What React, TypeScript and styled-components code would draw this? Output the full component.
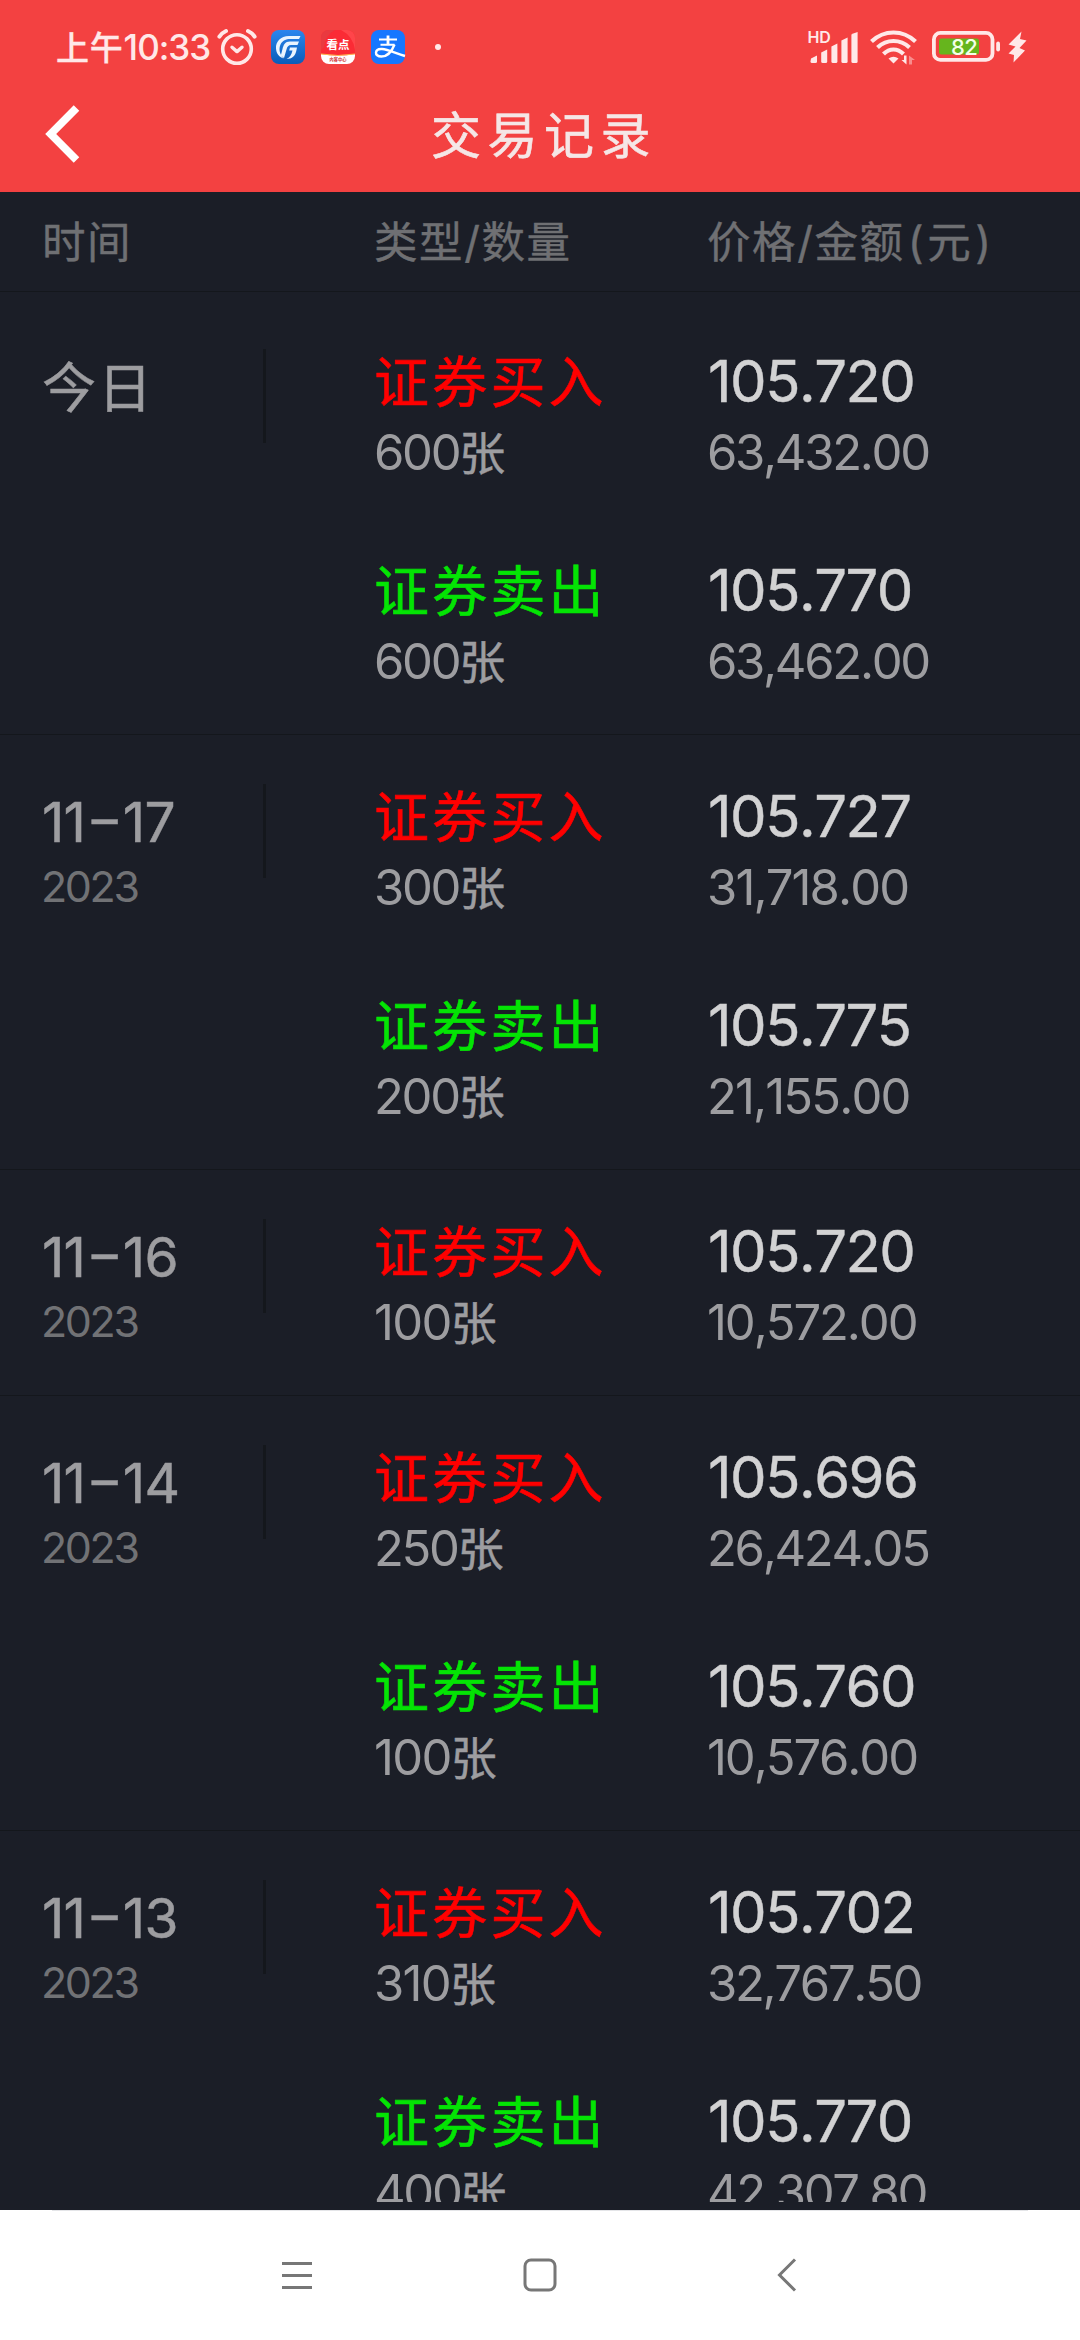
import React from "react";
import styled, { createGlobalStyle } from "styled-components";

const GlobalStyle = createGlobalStyle`
  * { box-sizing: border-box; }
  html, body { margin: 0; padding: 0; background: #1b1e27; }
  body { font-family: Inter, "Noto Sans CJK SC", sans-serif; font-kerning: none; }
`;

const Screen = styled.div`
  width: 1080px;
  height: 2340px;
  display: flex;
  flex-direction: column;
  overflow: hidden;
  background: #1b1e27;
  color: #9d9da0;
  white-space: nowrap;
`;

const TopBar = styled.header`
  height: 192px;
  background: #f34141;
`;

const StatusBar = styled.div`
  display: flex;
  justify-content: space-between;
  height: 80px;
  padding: 14px 53px 0 56px;
  color: #ffe8e8;
`;

const StatusSide = styled.div`
  display: flex;
  align-items: center;
  height: 66px;
`;

const Clock = styled.div`
  width: 161px;
  font-size: 35px;
  font-weight: 500;
  line-height: 66px;
  letter-spacing: -1px;
`;

const ClockPrefix = styled.span`
  font-size: 33px;
  letter-spacing: 0.8px;
  -webkit-text-stroke: 0.3px currentColor;
`;

const Glyph = styled.svg<{ $gap?: number }>`
  display: block;
  flex: none;
  overflow: visible;
  margin-left: ${(p) => p.$gap ?? 0}px;
  font-family: Inter, "Noto Sans CJK SC", sans-serif;
`;

const TitleBar = styled.div`
  display: grid;
  grid-template-columns: 200px 1fr 200px;
  align-items: center;
  height: 108px;
`;

const BackButton = styled.button`
  display: flex;
  border: 0;
  padding: 0 0 0 44px;
  background: none;
`;

const Title = styled.h1`
  margin: 0;
  padding: 4px 0 0 8px;
  text-align: center;
  font-size: 50px;
  font-weight: 400;
  line-height: 104px;
  letter-spacing: 6.5px;
  color: #f5e6e6;
  -webkit-text-stroke: 0.6px currentColor;
`;

const columns = "263px 111px 333px 1fr";

const TableHead = styled.div`
  display: grid;
  grid-template-columns: ${columns};
  height: 100px;
  padding-top: 1px;
  border-bottom: 1px solid #14171c;
  font-size: 43.5px;
  line-height: 98px;
  letter-spacing: 1.6px;
  color: #6f7073;
  -webkit-text-stroke: 0.4px currentColor;
`;

const HeadCell = styled.div<{ $column: number; $inset?: number }>`
  grid-column: ${(p) => p.$column};
  padding-left: ${(p) => p.$inset ?? 0}px;
`;

const Paren = styled.span`
  margin: 0 2px 0 3px;
`;

const List = styled.main`
  height: 1910px;
  padding-top: 8px;
  overflow: hidden;
`;

const DayGroup = styled.section`
  display: grid;
  grid-template-columns: ${columns};
  border-bottom: 1px solid #14171c;
`;

const DayCell = styled.div`
  padding: 52px 0 0 42px;
`;

const Day = styled.div<{ $word?: boolean }>`
  padding-top: ${(p) => (p.$word ? 2 : 0)}px;
  font-size: ${(p) => (p.$word ? 54 : 55)}px;
  line-height: 70px;
  letter-spacing: ${(p) => (p.$word ? 2 : -0.8)}px;
  -webkit-text-stroke: 0.5px currentColor;
`;

const Dash = styled.span`
  display: inline-block;
  margin: 0 5px 0 6px;
  line-height: 50px;
  transform: translateY(-3px) scaleX(0.94);
`;

const Year = styled.div`
  font-size: 43px;
  line-height: 50px;
  letter-spacing: -2.4px;
  margin: 4px 0 0 -1px;
  color: #717275;
`;

const Divider = styled.div`
  width: 3px;
  height: 94px;
  margin-top: 49px;
  background: #14171c;
`;

const Trades = styled.div`
  grid-column: 3 / span 2;
  padding-bottom: 16px;
`;

const Trade = styled.div`
  display: grid;
  grid-template-columns: 333px 1fr;
  grid-template-rows: 76px 68px;
  height: 209px;
  padding-top: 43px;
`;

const Side = styled.div<{ $sell: boolean }>`
  padding-top: 1px;
  font-size: 55px;
  line-height: 76px;
  letter-spacing: 3.2px;
  color: ${(p) => (p.$sell ? "#04e404" : "#ff0000")};
  -webkit-text-stroke: 0.6px currentColor;
`;

const Price = styled.div`
  padding-left: 1px;
  font-size: 58px;
  line-height: 76px;
  letter-spacing: -1.5px;
  color: #d2d2d3;
  -webkit-text-stroke: 0.4px currentColor;
`;

/* Narrow "1" digits get extra tracking so that the amounts keep an even width. */
const Figure = styled.div<{ $tracking: number }>`
  font-size: 49px;
  line-height: 68px;
  letter-spacing: ${(p) => p.$tracking}px;
`;

const Unit = styled.span`
  font-size: 46px;
  -webkit-text-stroke: 0.5px currentColor;
`;

const NavBar = styled.nav`
  display: flex;
  height: 130px;
  margin-top: auto;
  padding: 0 52px;
  background: #fff;
`;

const NavInner = styled.div`
  display: flex;
  flex: 1;
  border-top: 1px solid #e4e5e8;
  padding: 46px 0 0 227px;
`;

const tracking = (value: string) => {
  const ones = value.split("1").length - 1;
  return -2.3 + (ones * 1.9) / value.length;
};

interface TradeRow {
  sell: boolean;
  quantity: string;
  price: string;
  amount: string;
}

interface DayRows {
  day: string;
  year?: string;
  trades: TradeRow[];
}

const buy = (quantity: string, price: string, amount: string): TradeRow => ({ sell: false, quantity, price, amount });
const sell = (quantity: string, price: string, amount: string): TradeRow => ({ sell: true, quantity, price, amount });

const days: DayRows[] = [
  { day: "今日", trades: [buy("600", "105.720", "63,432.00"), sell("600", "105.770", "63,462.00")] },
  { day: "11–17", year: "2023", trades: [buy("300", "105.727", "31,718.00"), sell("200", "105.775", "21,155.00")] },
  { day: "11–16", year: "2023", trades: [buy("100", "105.720", "10,572.00")] },
  { day: "11–14", year: "2023", trades: [buy("250", "105.696", "26,424.05"), sell("100", "105.760", "10,576.00")] },
  { day: "11–13", year: "2023", trades: [buy("310", "105.702", "32,767.50"), sell("400", "105.770", "42,307.80")] },
];

const DayLabel = ({ day }: { day: string }) => {
  const [month, date] = day.split("–");
  if (!date) return <Day $word>{day}</Day>;
  return (
    <Day>
      {month}
      <Dash>–</Dash>
      {date}
    </Day>
  );
};

const AlarmIcon = () => (
  <Glyph width="40" height="36" viewBox="0 0 40 36" fill="none" stroke="#ffe8e8" strokeLinecap="round">
    <circle cx="20" cy="20" r="14.3" strokeWidth="3.6" />
    <path d="M15 18.2l5 4.4 5-4.4" strokeWidth="3.4" strokeLinejoin="round" />
    <path d="M2.4 7.6Q5 3.8 9 2M37.6 7.6Q35 3.8 31 2" strokeWidth="4" />
  </Glyph>
);

const BrokerIcon = () => (
  <Glyph $gap={14} width="34" height="34" viewBox="0 0 34 34">
    <defs>
      <linearGradient id="broker" x1="0" y1="0" x2="0" y2="1">
        <stop offset="0" stopColor="#2a86ee" />
        <stop offset="1" stopColor="#0b5cb8" />
      </linearGradient>
    </defs>
    <rect width="34" height="34" rx="8" fill="url(#broker)" />
    <path d="M29.5 6H18C9.500 6 4.500 12 5 18.500C5.300 23.500 8 27 12.500 28.500C8.500 24 7.500 19 9.500 14.500C11.500 10.500 15 9 19 9H28Z" fill="#e9f4ff" />
    <path d="M28 11.500H19C14 11.500 12.500 15 11.500 19L9.800 25.500L13 28L15.500 19.500C16.200 16.500 17.500 15 20 15H26.500Z" fill="#e9f4ff" />
    <path d="M26 17.500H19L18.200 20.500H21.500C20.500 25 18.500 27.500 15.500 29C21 29 24.500 26 25.500 20Z" fill="#e9f4ff" />
  </Glyph>
);

const NewsIcon = () => (
  <Glyph $gap={16} width="34" height="34" viewBox="0 0 34 34">
    <defs>
      <clipPath id="news">
        <rect width="34" height="34" rx="8" />
      </clipPath>
    </defs>
    <g clipPath="url(#news)">
      <rect width="34" height="34" fill="#fb2b35" />
      <path d="M0 0H14Q4 5 3 17L0 20Z" fill="#e93a40" />
      <path d="M20 0Q32 6 34 20V0Z" fill="#ff454a" />
      <path d="M0 24Q17 27 34 24V34H0Z" fill="#fff" />
      <path d="M0 24Q17 27 34 24" stroke="#ffb54d" fill="none" />
      <text x="17" y="19" fontSize="11.500" fontWeight="700" fill="#fff" textAnchor="middle">看点</text>
      <text x="17" y="31" fontSize="4.200" fontWeight="700" fill="#d22f35" textAnchor="middle">内容中心</text>
    </g>
  </Glyph>
);

const PayIcon = () => (
  <Glyph $gap={16} width="34" height="34" viewBox="0 0 34 34" fill="none" stroke="#fff">
    <rect width="34" height="34" rx="8" fill="#1677ff" stroke="none" />
    <path d="M17 5.500V15" strokeWidth="2.800" />
    <path d="M8 9.500H26M9.500 14.800H23.500" strokeWidth="1.900" />
    <path d="M23.500 14.500C21 21 16.500 26.500 10.500 26.500C6.500 26.500 4.800 24.500 5 22.500C5.300 20 8 18.800 11 19C17 19.500 24 23 34 26" strokeWidth="2.400" />
  </Glyph>
);

const DotIcon = () => (
  <Glyph $gap={30} width="6" height="6" viewBox="0 0 6 6">
    <circle cx="3" cy="3" r="3" fill="#ffe8e8" />
  </Glyph>
);

const SignalIcon = () => (
  <Glyph width="52" height="34" viewBox="0 0 52 34" fill="#ffe8e8">
    <text x="-0.400" y="12.600" fontSize="16" fontWeight="600" letterSpacing="-0.400">HD</text>
    <path d="M3 28.600L9 25.500V31.500Q9 33 7.500 33H4Q2.500 33 2.500 31.500Z" />
    <path d="M13.200 22.600L19.200 19.500V31.500Q19.200 33 17.700 33H14.700Q13.200 33 13.200 31.500Z" />
    <path d="M23.400 16.600L29.400 13.500V31.500Q29.400 33 27.900 33H24.900Q23.400 33 23.400 31.500Z" />
    <path d="M33.400 10.600L39.600 7.500V31.500Q39.600 33 38.100 33H34.900Q33.400 33 33.400 31.500Z" />
    <path d="M43.400 4.600Q45.500 3 49.600 2V31.500Q49.600 33 48.100 33H44.900Q43.400 33 43.400 31.500Z" />
  </Glyph>
);

const WifiIcon = () => (
  <Glyph $gap={10} width="48" height="36" viewBox="0 0 48 36" fill="none" stroke="#ffe8e8" strokeWidth="4.200">
    <path d="M1.500 12.500Q11 3.500 23.500 3.500T45.500 12.500" />
    <path d="M7.500 18.500Q14.500 12 23.500 12T39.500 18.500" />
    <path d="M13.500 25Q18 20.500 23.500 20.500T33.500 25" />
    <path d="M23.500 34.500L18.500 29.500Q23.500 26 28.500 29.500Z" fill="#ffe8e8" stroke="none" />
    <path d="M36.500 26.500V35.500L31.500 31H34V26.500Z" fill="#ffe8e8" stroke="none" />
    <path d="M39 35.500V26.500L45 31H42V35.500Z" fill="#ffe8e8" stroke="none" opacity="0.450" />
  </Glyph>
);

const BatteryIcon = () => (
  <Glyph $gap={14} width="68" height="32" viewBox="0 0 68 32">
    <rect x="1.900" y="1.900" width="58.600" height="27" rx="6.500" fill="none" stroke="#ffe8e8" strokeWidth="3.800" />
    <rect x="7" y="7.500" width="40" height="16" rx="2.500" fill="#66b51d" />
    <rect x="64.200" y="10.500" width="3.800" height="10" rx="1.900" fill="#ffe8e8" />
    <text x="32.200" y="23.600" fontSize="22" fontWeight="500" letterSpacing="-0.600" textAnchor="middle" fill="#f4ffe8">82</text>
  </Glyph>
);

const BoltIcon = () => (
  <Glyph $gap={8} width="19" height="32" viewBox="0 0 19 32">
    <path d="M13.500 0.500L0.500 13.500L7.500 15.500L0.500 22.500L6 24L5.500 31.500L17 19.500L11.500 17L18.500 9.500L12 8Z" fill="#ffe8e8" />
  </Glyph>
);

const BackIcon = () => (
  <Glyph width="36" height="60" viewBox="0 0 36 60" fill="none" stroke="#fff" strokeWidth="7.800">
    <path d="M32.500 4L6.700 30L32.500 56" />
  </Glyph>
);

const App: React.FC = () => (
  <>
    <GlobalStyle />
    <Screen>
      <TopBar>
        <StatusBar>
          <StatusSide>
            <Clock>
              <ClockPrefix>上午</ClockPrefix>10:33
            </Clock>
            <AlarmIcon />
            <BrokerIcon />
            <NewsIcon />
            <PayIcon />
            <DotIcon />
          </StatusSide>
          <StatusSide>
            <SignalIcon />
            <WifiIcon />
            <BatteryIcon />
            <BoltIcon />
          </StatusSide>
        </StatusBar>
        <TitleBar>
          <BackButton aria-label="返回">
            <BackIcon />
          </BackButton>
          <Title>交易记录</Title>
        </TitleBar>
      </TopBar>
      <TableHead>
        <HeadCell $column={1} $inset={42}>时间</HeadCell>
        <HeadCell $column={3}>类型/数量</HeadCell>
        <HeadCell $column={4}>
          价格/金额<Paren>(</Paren>元<Paren>)</Paren>
        </HeadCell>
      </TableHead>
      <List>
        {days.map((d) => (
          <DayGroup key={d.day}>
            <DayCell>
              <DayLabel day={d.day} />
              {d.year && <Year>{d.year}</Year>}
            </DayCell>
            <Divider />
            <Trades>
              {d.trades.map((t, i) => (
                <Trade key={i}>
                  <Side $sell={t.sell}>{t.sell ? "证券卖出" : "证券买入"}</Side>
                  <Price>{t.price}</Price>
                  <Figure $tracking={tracking(t.quantity)}>
                    {t.quantity}
                    <Unit>张</Unit>
                  </Figure>
                  <Figure $tracking={tracking(t.amount)}>{t.amount}</Figure>
                </Trade>
              ))}
            </Trades>
          </DayGroup>
        ))}
      </List>
      <NavBar>
        <NavInner>
          <Glyph width="36" height="36" viewBox="0 0 36 36" stroke="#777" strokeWidth="3">
            <path d="M3 6.500H33M3 18.500H33M3 30.500H33" />
          </Glyph>
          <Glyph $gap={207} width="36" height="36" viewBox="0 0 36 36" fill="none" stroke="#777" strokeWidth="3">
            <rect x="3" y="3" width="30" height="30" rx="6" />
          </Glyph>
          <Glyph $gap={212} width="36" height="36" viewBox="0 0 36 36" fill="none" stroke="#777" strokeWidth="3">
            <path d="M25 2.500L9.500 18L25 33.500" />
          </Glyph>
        </NavInner>
      </NavBar>
    </Screen>
  </>
);

export default App;
